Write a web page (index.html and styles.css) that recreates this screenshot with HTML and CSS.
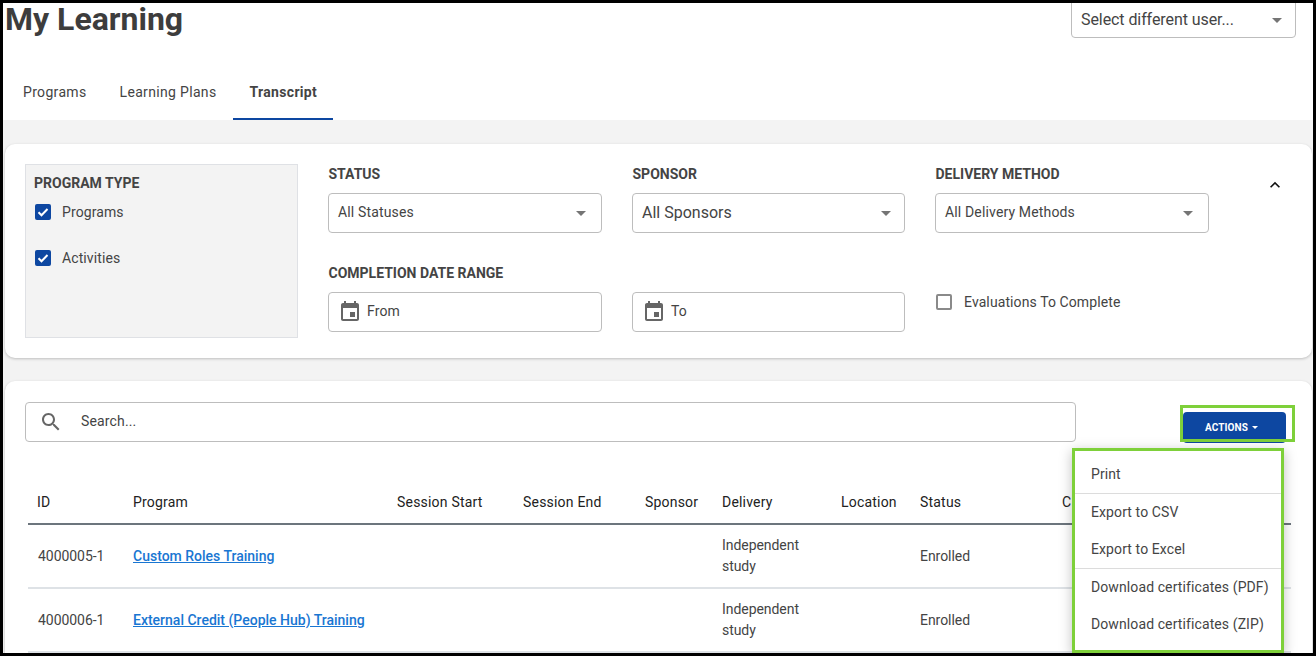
FILE: index.html
```html
<!DOCTYPE html>
<html lang="en">
<head>
    <meta charset="UTF-8">
    <title>My Learning</title>
    <link rel="stylesheet" href="styles.css">
</head>
<body>
    <div class="frame">
        <header class="page-head">
            <div class="title-row">
                <h1>My Learning</h1>
                <div class="select user-select"><span>Select different user...</span><i class="caret"></i></div>
            </div>
            <nav class="tabs">
                <a href="#programs" class="tab">Programs</a>
                <a href="#plans" class="tab">Learning Plans</a>
                <a href="#transcript" class="tab active">Transcript</a>
            </nav>
        </header>

        <main class="content">
            <section class="card filters">
                <div class="program-type">
                    <div class="label">PROGRAM TYPE</div>
                    <label class="check-row"><span class="checkbox checked"><svg viewBox="0 0 16 16" width="16" height="16"><path d="M3.5 8.2l3 3 6-6.2" fill="none" stroke="#fff" stroke-width="2"/></svg></span>Programs</label>
                    <label class="check-row"><span class="checkbox checked"><svg viewBox="0 0 16 16" width="16" height="16"><path d="M3.5 8.2l3 3 6-6.2" fill="none" stroke="#fff" stroke-width="2"/></svg></span>Activities</label>
                </div>
                <div class="filter-grid">
                    <div class="field">
                        <div class="label">STATUS</div>
                        <div class="select"><span>All Statuses</span><i class="caret"></i></div>
                    </div>
                    <div class="field">
                        <div class="label">SPONSOR</div>
                        <div class="select sponsor"><span class="large">All Sponsors</span><i class="caret"></i></div>
                    </div>
                    <div class="field">
                        <div class="label">DELIVERY METHOD</div>
                        <div class="select"><span>All Delivery Methods</span><i class="caret"></i></div>
                    </div>
                    <div class="field">
                        <div class="label nowrap">COMPLETION DATE RANGE</div>
                        <div class="select date">
                            <svg viewBox="0 0 24 24" width="24" height="24"><path fill="#666" d="M17 12h-5v5h5v-5zM16 1v2H8V1H6v2H5c-1.11 0-1.99.9-1.99 2L3 19c0 1.1.89 2 2 2h14c1.1 0 2-.9 2-2V5c0-1.1-.9-2-2-2h-1V1h-2zm3 18H5V8h14v11z"/></svg>
                            <span>From</span>
                        </div>
                    </div>
                    <div class="field">
                        <div class="label">&nbsp;</div>
                        <div class="select date">
                            <svg viewBox="0 0 24 24" width="24" height="24"><path fill="#666" d="M17 12h-5v5h5v-5zM16 1v2H8V1H6v2H5c-1.11 0-1.99.9-1.99 2L3 19c0 1.1.89 2 2 2h14c1.1 0 2-.9 2-2V5c0-1.1-.9-2-2-2h-1V1h-2zm3 18H5V8h14v11z"/></svg>
                            <span>To</span>
                        </div>
                    </div>
                    <div class="field eval-field">
                        <label class="check-row"><span class="checkbox"></span>Evaluations To Complete</label>
                    </div>
                </div>
                <svg class="collapse" viewBox="0 0 24 24" width="20" height="20"><path fill="#111" d="M12 8l-6 6 1.41 1.41L12 10.83l4.59 4.58L18 14z"/></svg>
            </section>

            <section class="card results">
                <div class="toolbar">
                    <div class="select search">
                        <svg viewBox="0 0 24 24" width="24" height="24"><path fill="#666" d="M15.5 14h-.79l-.28-.27C15.41 12.59 16 11.11 16 9.5 16 5.91 13.09 3 9.5 3S3 5.91 3 9.5 5.91 16 9.5 16c1.61 0 3.09-.59 4.23-1.57l.27.28v.79l5 4.99L20.49 19l-4.99-5zm-6 0C7.01 14 5 11.99 5 9.5S7.01 5 9.5 5 14 7.01 14 9.5 11.99 14 9.5 14z"/></svg>
                        <span>Search...</span>
                    </div>
                    <div class="actions">
                        <button class="actions-btn">ACTIONS<i class="caret small"></i></button>
                        <div class="highlight"></div>
                        <ul class="menu">
                            <li class="divided">Print</li>
                            <li>Export to CSV</li>
                            <li class="divided">Export to Excel</li>
                            <li>Download certificates (PDF)</li>
                            <li>Download certificates (ZIP)</li>
                        </ul>
                    </div>
                </div>

                <table class="transcript">
                    <colgroup>
                        <col style="width:95px"><col style="width:264px"><col style="width:126px"><col style="width:122px"><col style="width:77px"><col style="width:119px"><col style="width:79px"><col style="width:142px"><col style="width:239px">
                    </colgroup>
                    <thead>
                        <tr><th>ID</th><th>Program</th><th>Session Start</th><th>Session End</th><th>Sponsor</th><th>Delivery</th><th>Location</th><th>Status</th><th>C</th></tr>
                    </thead>
                    <tbody>
                        <tr><td>4000005-1</td><td><a href="#r1">Custom Roles Training</a></td><td></td><td></td><td></td><td>Independent study</td><td></td><td>Enrolled</td><td></td></tr>
                        <tr><td>4000006-1</td><td><a href="#r2">External Credit (People Hub) Training</a></td><td></td><td></td><td></td><td>Independent study</td><td></td><td>Enrolled</td><td></td></tr>
                    </tbody>
                </table>
            </section>
        </main>
    </div>
</body>
</html>
```

FILE: styles.css
```css
html, body {
    margin: 0;
    padding: 0;
    height: 100%;
    overflow: hidden;
}

body {
    font-family: Roboto, 'Liberation Sans', sans-serif;
    font-size: 14px;
    color: #444;
    letter-spacing: 0.1px;
}

.frame {
    box-sizing: border-box;
    width: 1316px;
    height: 656px;
    border: 3px solid #000;
    overflow: hidden;
    background-color: #f3f3f3;
}

/* header */
.page-head {
    background-color: #fff;
    height: 117px;
}

.title-row {
    display: flex;
    justify-content: space-between;
    align-items: flex-start;
    height: 67px;
    padding: 0 17px 0 2px;
}

h1 {
    margin: -3px 0 0;
    font-size: 32px;
    line-height: 38px;
    font-weight: 700;
    letter-spacing: 0;
    color: #3d3d3d;
}

.tabs {
    display: flex;
    padding-left: 4px;
    height: 50px;
}

.tab {
    display: flex;
    align-items: center;
    padding: 0 16px 6px;
    margin-right: 1px;
    box-sizing: border-box;
    color: #444;
    text-decoration: none;
    letter-spacing: 0.33px;
}

.tab.active {
    font-weight: 700;
    margin-right: 0;
    border-bottom: 2px solid #0d47a1;
    padding-bottom: 4px;
}

/* cards */
.content {
    padding: 24px 1px 0 2px;
}

.card {
    background-color: #fff;
    border-radius: 10px;
    box-shadow: 0 1px 3px rgba(0, 0, 0, 0.22);
}

.filters {
    position: relative;
    display: flex;
    height: 214px;
    box-sizing: border-box;
    padding: 20px 0 0 20px;
    margin-bottom: 23px;
}

.program-type {
    box-sizing: border-box;
    width: 273px;
    height: 174px;
    padding: 10px 8px;
    background-color: #f3f3f3;
    border: 1px solid #dfe1e5;
}

.label {
    font-weight: 700;
    color: #444;
    line-height: 17px;
    letter-spacing: 0;
}

.nowrap {
    white-space: nowrap;
}

.program-type .label {
    margin-bottom: 8px;
}

.check-row {
    display: flex;
    align-items: center;
    height: 24px;
    margin-bottom: 22px;
    padding-left: 1px;
}

.checkbox {
    box-sizing: border-box;
    width: 16px;
    height: 16px;
    margin-right: 11px;
    border: 2px solid #8a8a8a;
    border-radius: 2px;
    background-color: #fff;
}

.checkbox.checked {
    border: 0;
    background-color: #0d47a1;
}

.checkbox svg {
    display: block;
}

.filter-grid {
    display: grid;
    grid-template-columns: 274px 273px 274px;
    grid-auto-rows: 99px;
    column-gap: 30px;
    margin-left: 30px;
}

.field .label {
    padding: 2px 0 0 0.5px;
    margin-bottom: 10px;
}

.eval-field {
    padding-top: 27px;
}

.eval-field .checkbox {
    margin-right: 12px;
}

.select {
    box-sizing: border-box;
    display: flex;
    align-items: center;
    justify-content: space-between;
    height: 40px;
    padding: 0 12px 0 9px;
    background-color: #fff;
    border: 1px solid #bdbdbd;
    border-radius: 4px;
}

.select span {
    padding-bottom: 2px;
    letter-spacing: 0.15px;
}

.select .large {
    font-size: 16px;
    letter-spacing: 0;
}

.caret {
    width: 0;
    height: 0;
    border-left: 5px solid transparent;
    border-right: 5px solid transparent;
    border-top: 5px solid #757575;
    margin-right: 3px;
}

.sponsor .caret {
    margin-right: 1px;
}

.caret.small {
    display: inline-block;
    border-left-width: 3.5px;
    border-right-width: 3.5px;
    border-top: 3px solid #fff;
    margin: 0 0 1px 4px;
    vertical-align: middle;
}

.user-select {
    width: 225px;
    height: 42px;
    margin-top: -7px;
    padding-top: 7px;
    font-size: 16px;
}

.user-select span {
    letter-spacing: -0.08px;
}

.user-select .caret {
    margin-right: 1px;
}

.date {
    justify-content: flex-start;
    gap: 5px;
}

.collapse {
    position: absolute;
    top: 31px;
    right: 27px;
}

/* results */
.results {
    position: relative;
    height: 300px;
    padding: 21px 20px 0 23px;
}

.toolbar {
    display: flex;
    align-items: flex-start;
    height: 81px;
    margin-left: -3px;
}

.search {
    justify-content: flex-start;
    width: 1051px;
    padding-left: 13px;
}

.search span {
    margin-left: 18px;
}

.actions {
    position: relative;
    margin: 10px 0 0 107px;
}

.actions-btn {
    display: block;
    width: 103px;
    height: 31px;
    padding: 0 6px 0 0;
    border: 0;
    border-radius: 4px;
    background-color: #0d47a1;
    color: #fff;
    font-family: inherit;
    font-size: 10px;
    font-weight: 700;
    letter-spacing: 0.1px;
}

.highlight {
    position: absolute;
    top: -7px;
    left: -3px;
    box-sizing: border-box;
    width: 115px;
    height: 37px;
    border: 3px solid #7ed03a;
}

.menu {
    position: absolute;
    top: 36px;
    left: -111px;
    box-sizing: border-box;
    width: 212px;
    height: 205px;
    margin: 0;
    padding: 5px 0;
    list-style: none;
    background-color: #fff;
    border: 3px solid #7ed03a;
    box-shadow: 0 3px 12px rgba(0, 0, 0, 0.25);
    z-index: 2;
}

.menu li {
    height: 37.5px;
    line-height: 37px;
    padding-left: 16px;
    white-space: nowrap;
}

.menu li.divided {
    border-bottom: 1px solid #dcdcdc;
    box-sizing: border-box;
}

.transcript {
    table-layout: fixed;
    width: 1263px;
    border-collapse: collapse;
}

.transcript th {
    height: 41px;
    padding: 0 0 2px 10px;
    box-sizing: border-box;
    text-align: left;
    font-weight: 400;
    letter-spacing: 0.2px;
    color: #222;
    border-bottom: 2px solid #6c757d;
    white-space: nowrap;
}

.transcript th:first-child {
    padding-left: 9px;
}

.transcript td {
    height: 62px;
    padding: 0 10px;
    line-height: 21px;
    letter-spacing: -0.05px;
    border-bottom: 2px solid #dee2e6;
}

.transcript a {
    color: #1976d2;
    font-weight: 500;
    letter-spacing: 0;
}
```
